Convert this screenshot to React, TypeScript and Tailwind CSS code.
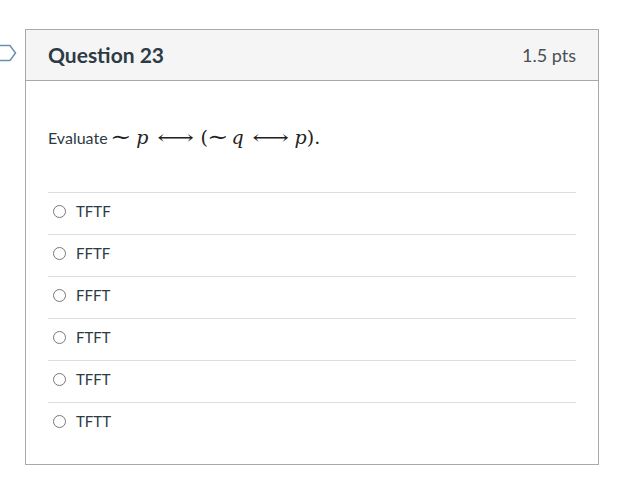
const options = ["TFTF", "FFTF", "FFFT", "FTFT", "TFFT", "TFTT"];

function Bookmark() {
  return (
    <svg className="absolute left-0 top-[44px]" width="18" height="18" viewBox="0 0 18 18">
      <path d="M-2 1.5 H10 L15.5 9 L10 16.5 H-2" fill="none" stroke="#6a8fb0" strokeWidth="1.5" />
    </svg>
  );
}

function Radio() {
  return <span className="block h-[13px] w-[13px] rounded-full border border-[#777] bg-white" />;
}

/* KaTeX-ish inline math */
function Arrow() {
  return (
    <span className="inline-block w-[30px] text-center">
      <span className="inline-block scale-x-[1.35]">⟷</span>
    </span>
  );
}

function Tilde() {
  return <span className="inline-block scale-x-[1.2] text-[21px] leading-none">∼</span>;
}

function MathExpr() {
  const serif = { fontFamily: '"DejaVu Serif", "Liberation Serif", serif' };
  return (
    <span className="inline-flex items-baseline text-[19px] leading-[24px] text-[#222]" style={serif}>
      <span className="ml-[4px]"><Tilde /></span>
      <span className="ml-[7px] italic">p</span>
      <span className="ml-[12px]"><Arrow /></span>
      <span className="ml-[10px]">(</span>
      <span className="ml-[1px]"><Tilde /></span>
      <span className="ml-[5px] italic">q</span>
      <span className="ml-[12px]"><Arrow /></span>
      <span className="ml-[9px] italic">p</span>
      <span>).</span>
    </span>
  );
}

export default function App() {
  return (
    <div className="relative h-[481px] w-[632px] bg-white font-['Lato','Liberation_Sans',sans-serif] text-[#2d3b45]">
      <Bookmark />
      <div className="ml-[25px] w-[574px] translate-y-[29px] border border-[#aaaaaa] bg-white">
        <div className="flex h-[51px] items-center justify-between border-b border-[#aaaaaa] bg-[#f5f5f5] px-[22px]">
          <span className="text-[21px] font-bold">Question 23</span>
          <span className="text-[18px] text-[#4a4f55]">1.5 pts</span>
        </div>
        <div className="px-[22px] pb-[20px] pt-[44px]">
          <div className="flex h-[24px] items-baseline text-[16px] leading-[24px]">
            Evaluate
            <MathExpr />
          </div>
          <div className="mt-[43px]">
            {options.map((o) => (
              <div key={o} className="flex h-[42px] items-center gap-[10px] border-t border-[#dddddd] pb-[5px] pl-[5px]">
                <Radio />
                <span className="text-[15px]">{o}</span>
              </div>
            ))}
          </div>
        </div>
      </div>
    </div>
  );
}
